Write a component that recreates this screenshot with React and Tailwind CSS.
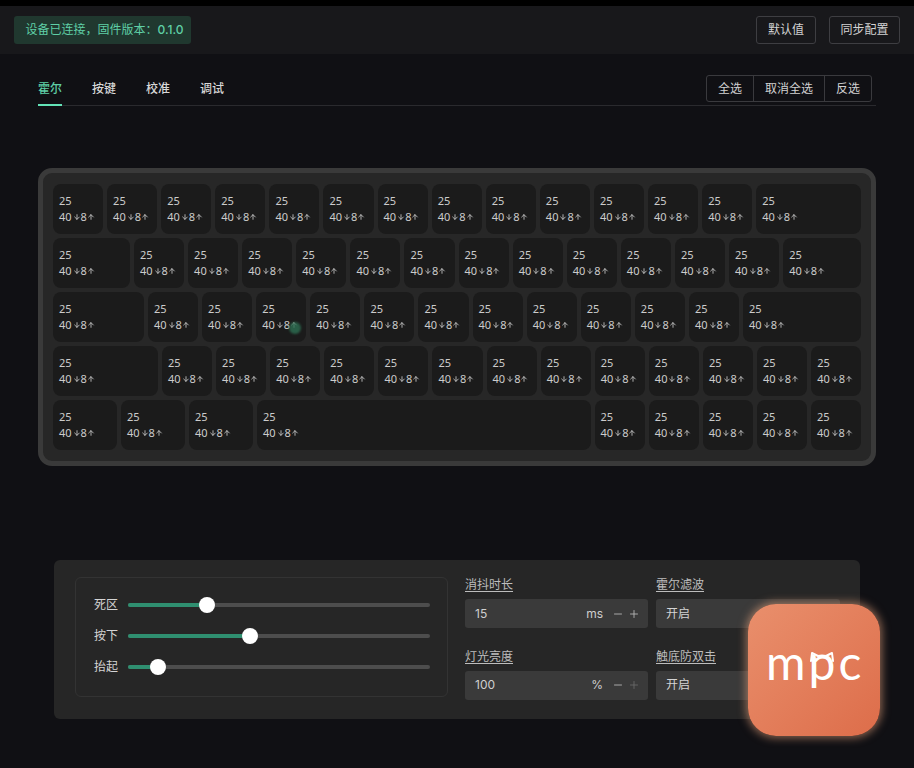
import { ArrowDown, ArrowUp, Minus, Plus } from "lucide-react";

const FONT = "font-['Inter','Noto_Sans_CJK_SC',sans-serif]";

const U = "w-[50.1px]";
const ROWS = [
  [U, ...Array(12).fill(U), "flex-1"],
  ["w-[77px]", ...Array(12).fill(U), "flex-1"],
  ["w-[91px]", ...Array(11).fill(U), "flex-1"],
  ["w-[105px]", ...Array(12).fill(U), "flex-1"],
  ["w-[64px]", "w-[64px]", "w-[64px]", "flex-1", U, U, U, U, U],
];

const SLIDERS = [
  { label: "死区", pct: 26.2 },
  { label: "按下", pct: 40.4 },
  { label: "抬起", pct: 10 },
];

function Key({ width }) {
  return (
    <div className={`${width} h-[50px] shrink-0 rounded-lg bg-[#1b1b1b] pl-1.5 pt-[9px] font-['Noto_Sans',sans-serif] text-[11px] leading-4 text-[#cccccc]`}>
      <div>25</div>
      <div className="flex items-center">
        40
        <ArrowDown size={8} strokeWidth={2.5} className="ml-px" />
        8
        <ArrowUp size={8} strokeWidth={2.5} />
      </div>
    </div>
  );
}

function Slider({ label, pct }) {
  return (
    <div className="flex h-[31px] items-center">
      <span className="w-[34px] text-xs text-[#d4d4d4]">{label}</span>
      <div className="relative h-1 w-[302px] rounded-full bg-[#4d4d4d]">
        <div className="h-full rounded-full bg-[#2f8f70]" style={{ width: `${pct}%` }} />
        <div
          className="absolute top-1/2 size-4 -translate-x-1/2 -translate-y-1/2 rounded-full bg-white"
          style={{ left: `${pct}%` }}
        />
      </div>
    </div>
  );
}

function NumberField({ label, value, unit, plusDim }) {
  return (
    <div>
      <div className="mb-1.5 text-xs leading-4 text-[#bdbdbd] underline underline-offset-2">{label}</div>
      <div className="flex h-[29px] items-center rounded-[3px] bg-[#3a3a3a] pl-2.5 pr-2 text-xs text-[#cfcfcf]">
        <span className="flex-1">{value}</span>
        <span className="mr-[9px]">{unit}</span>
        <span className="flex w-[28px] justify-between text-[#b8b8b8]">
          <Minus size={12} strokeWidth={1.75} />
          <Plus size={12} strokeWidth={1.75} className={plusDim ? "text-[#6a6a6a]" : ""} />
        </span>
      </div>
    </div>
  );
}

function SelectField({ label }) {
  return (
    <div>
      <div className="mb-1.5 text-xs leading-4 text-[#bdbdbd] underline underline-offset-2">{label}</div>
      <div className="flex h-[29px] items-center rounded-[3px] bg-[#3a3a3a] px-2.5 text-xs text-[#d4d4d4]">开启</div>
    </div>
  );
}

export default function App() {
  return (
    <div className={`${FONT} relative h-[768px] overflow-hidden bg-[#101014]`}>
      <div className="h-1.5 bg-black" />

      <header className="flex h-12 items-center justify-between bg-[#18181b] px-3.5">
        <div className="flex h-7 w-[177px] items-center rounded-[3px] bg-[#20382f] pl-[11.5px] text-xs text-[#5fcfa6]">
          设备已连接，固件版本：<span className="font-medium">0.1.0</span>
        </div>
        <div className="flex gap-[13px]">
          <button className="h-7 w-[60px] rounded-[3px] border border-[#3e3e42] text-xs text-[#d2d2d2]">默认值</button>
          <button className="h-7 w-[71px] rounded-[3px] border border-[#3e3e42] text-xs text-[#d2d2d2]">同步配置</button>
        </div>
      </header>

      <main className="px-[38px]">
        <nav className="mt-[21px] flex h-[31px] justify-between border-b border-[#2a2a2e]">
          <div className="flex gap-[30px] text-xs font-medium leading-[27px] text-[#d8d8d8]">
            <span className="h-[31px] border-b-2 border-[#63e2b7] text-[#5fcfa6]">霍尔</span>
            <span>按键</span>
            <span>校准</span>
            <span>调试</span>
          </div>
          <div className="mr-1 flex h-[27px] rounded-[3px] border border-[#3a3a3e] text-xs text-[#d2d2d2]">
            <button className="w-[46px]">全选</button>
            <button className="w-[72px] border-x border-[#3a3a3e]">取消全选</button>
            <button className="w-[46px]">反选</button>
          </div>
        </nav>

        <section className="relative mt-[62px] flex w-[838px] flex-col gap-1 rounded-[14px] border-[5px] border-[#3a3a3a] bg-[#272727] px-2.5 py-[11px]">
          {ROWS.map((row, i) => (
            <div key={i} className="flex gap-1">
              {row.map((width, j) => (
                <Key key={j} width={width} />
              ))}
            </div>
          ))}
          {/* click ripple on the key */}
          <span className="absolute left-[246px] top-[149px] size-3 rounded-full bg-[#2d6f52]/80 blur-[1px]" />
        </section>

        <section className="ml-4 mt-[94px] flex h-[159px] w-[806px] gap-[17px] rounded-md bg-[#262626] py-[17px] pl-[21px]">
          <div className="h-[120px] w-[373px] rounded-md border border-[#333333] pl-[18px] pt-[11px]">
            {SLIDERS.map((s) => (
              <Slider key={s.label} {...s} />
            ))}
          </div>
          <div className="grid w-[375px] grid-cols-[183px_184px] gap-x-2 gap-y-[18px]">
            <NumberField label="消抖时长" value="15" unit="ms" />
            <SelectField label="霍尔滤波" />
            <NumberField label="灯光亮度" value="100" unit="%" plusDim />
            <SelectField label="触底防双击" />
          </div>
        </section>
      </main>

      {/* app logo, floats over the panel */}
      <div className="absolute left-[748px] top-[604px] size-[132px] rounded-[28px] bg-gradient-to-br from-[#e98f6c] to-[#dd6d4a] shadow-[0_0_8px_2px_rgba(240,170,130,0.55)]">
        <span className="absolute left-[18px] top-[28px] font-['Lato',sans-serif] text-[48px] font-normal leading-[60px] tracking-[3px] text-white">
          mpc
        </span>
        <svg className="absolute left-[61px] top-[47px]" width="26" height="12" viewBox="0 0 26 12" fill="none">
          <path
            d="M2 10 L3 2 L9 5 C11 4.4 15 4.4 17 5 L23 2 L24 10"
            stroke="#fff"
            strokeWidth="2"
            strokeLinecap="round"
            strokeLinejoin="round"
          />
        </svg>
      </div>
    </div>
  );
}
